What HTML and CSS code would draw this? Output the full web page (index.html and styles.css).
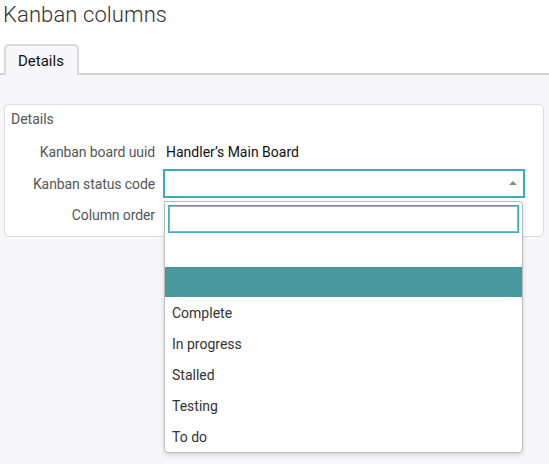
FILE: index.html
```html
<!DOCTYPE html>
<html>
<head>
<meta charset="utf-8">
<link rel="stylesheet" href="styles.css">
</head>
<body>
<div class="header">
  <h1 class="title">Kanban columns</h1>
  <div class="tabs"><div class="tab">Details</div></div>
</div>
<div class="panel">
  <div class="fieldset">
    <div class="legend">Details</div>
    <div class="form">
      <div class="label">Kanban board uuid</div>
      <div class="value">Handler’s Main Board</div>
      <div class="label">Kanban status code</div>
      <div class="field">
        <div class="select"><span class="arrow"></span></div>
        <div class="dropdown">
          <div class="search"><div class="search-input"></div></div>
          <ul class="options">
            <li class="option blank">&nbsp;</li>
            <li class="option hl">&nbsp;</li>
            <li class="option">Complete</li>
            <li class="option">In progress</li>
            <li class="option">Stalled</li>
            <li class="option">Testing</li>
            <li class="option">To do</li>
          </ul>
        </div>
      </div>
      <div class="label">Column order</div>
      <div class="field"></div>
    </div>
  </div>
</div>
</body>
</html>
```
FILE: styles.css
```css
html, body {
  margin: 0;
  padding: 0;
  background: #f7f7f9;
  font-family: Roboto, "Liberation Sans", sans-serif;
  font-size: 14px;
  color: #333;
  min-height: 100%;
}
body { min-height: 464px; }
.header {
  background: #fff;
}
.title {
  margin: 0;
  padding-left: 3px;
  font-size: 22px;
  font-weight: 300;
  line-height: 30px;
  color: #333;
  letter-spacing: 0.1px;
}
.tabs {
  margin-top: 14px;
  border-bottom: 2px solid #d4d4d6;
  display: flex;
  padding-left: 4px;
}
.tab {
  width: 75px;
  box-sizing: border-box;
  border: 2px solid #d8d8da;
  border-bottom: none;
  border-radius: 5px 5px 0 0;
  background: #f7f7f9;
  padding: 6px 12px 5px 12px;
  font-size: 15px;
  line-height: 18px;
  color: #111;
  margin-bottom: -2px;
}
.panel {
  padding: 29px 5px 0 4px;
}
.fieldset {
  background: #fff;
  border: 1px solid #dcdcde;
  border-radius: 5px;
  padding: 4px 18px 6px 0;
}
.legend {
  padding-left: 6px;
  line-height: 20px;
  color: #555;
  margin-bottom: 8px;
}
.form {
  display: grid;
  grid-template-columns: 150px 1fr;
  grid-template-rows: 30px 29px 30px;
  column-gap: 8px;
  row-gap: 2px;
  align-items: center;
}
.label {
  text-align: right;
  color: #555;
  letter-spacing: -0.1px;
}
.value {
  padding-left: 3px;
  color: #111;
}
.field {
  position: relative;
  height: 100%;
}
.select {
  height: 29px;
  box-sizing: border-box;
  border: 2px solid #38b0b8;
  background: #fff;
  position: relative;
}
.arrow {
  position: absolute;
  right: 6px;
  top: 10px;
  width: 0;
  height: 0;
  border-left: 4px solid transparent;
  border-right: 4px solid transparent;
  border-bottom: 4px solid #888;
}
.dropdown {
  position: absolute;
  z-index: 10;
  top: calc(100% + 3px);
  left: 1px;
  width: 359px;
  box-sizing: border-box;
  background: #fff;
  border: 1px solid #bcbcbc;
  border-radius: 0 4px 4px 4px;
  box-shadow: 0 2px 5px rgba(0, 0, 0, 0.15);
  overflow: hidden;
}
.search {
  padding: 3px;
}
.search-input {
  height: 28px;
  box-sizing: border-box;
  border: 1px solid #38b0b8;
  box-shadow: inset 0 0 0 1px #a8a8a8;
  background: #fff;
}
.options {
  list-style: none;
  margin: 0;
  padding: 0;
}
.option {
  height: 31px;
  line-height: 32px;
  padding: 0 7px;
  color: #333;
}
.option.hl {
  height: 30px;
  background: #489a9f;
}
```
